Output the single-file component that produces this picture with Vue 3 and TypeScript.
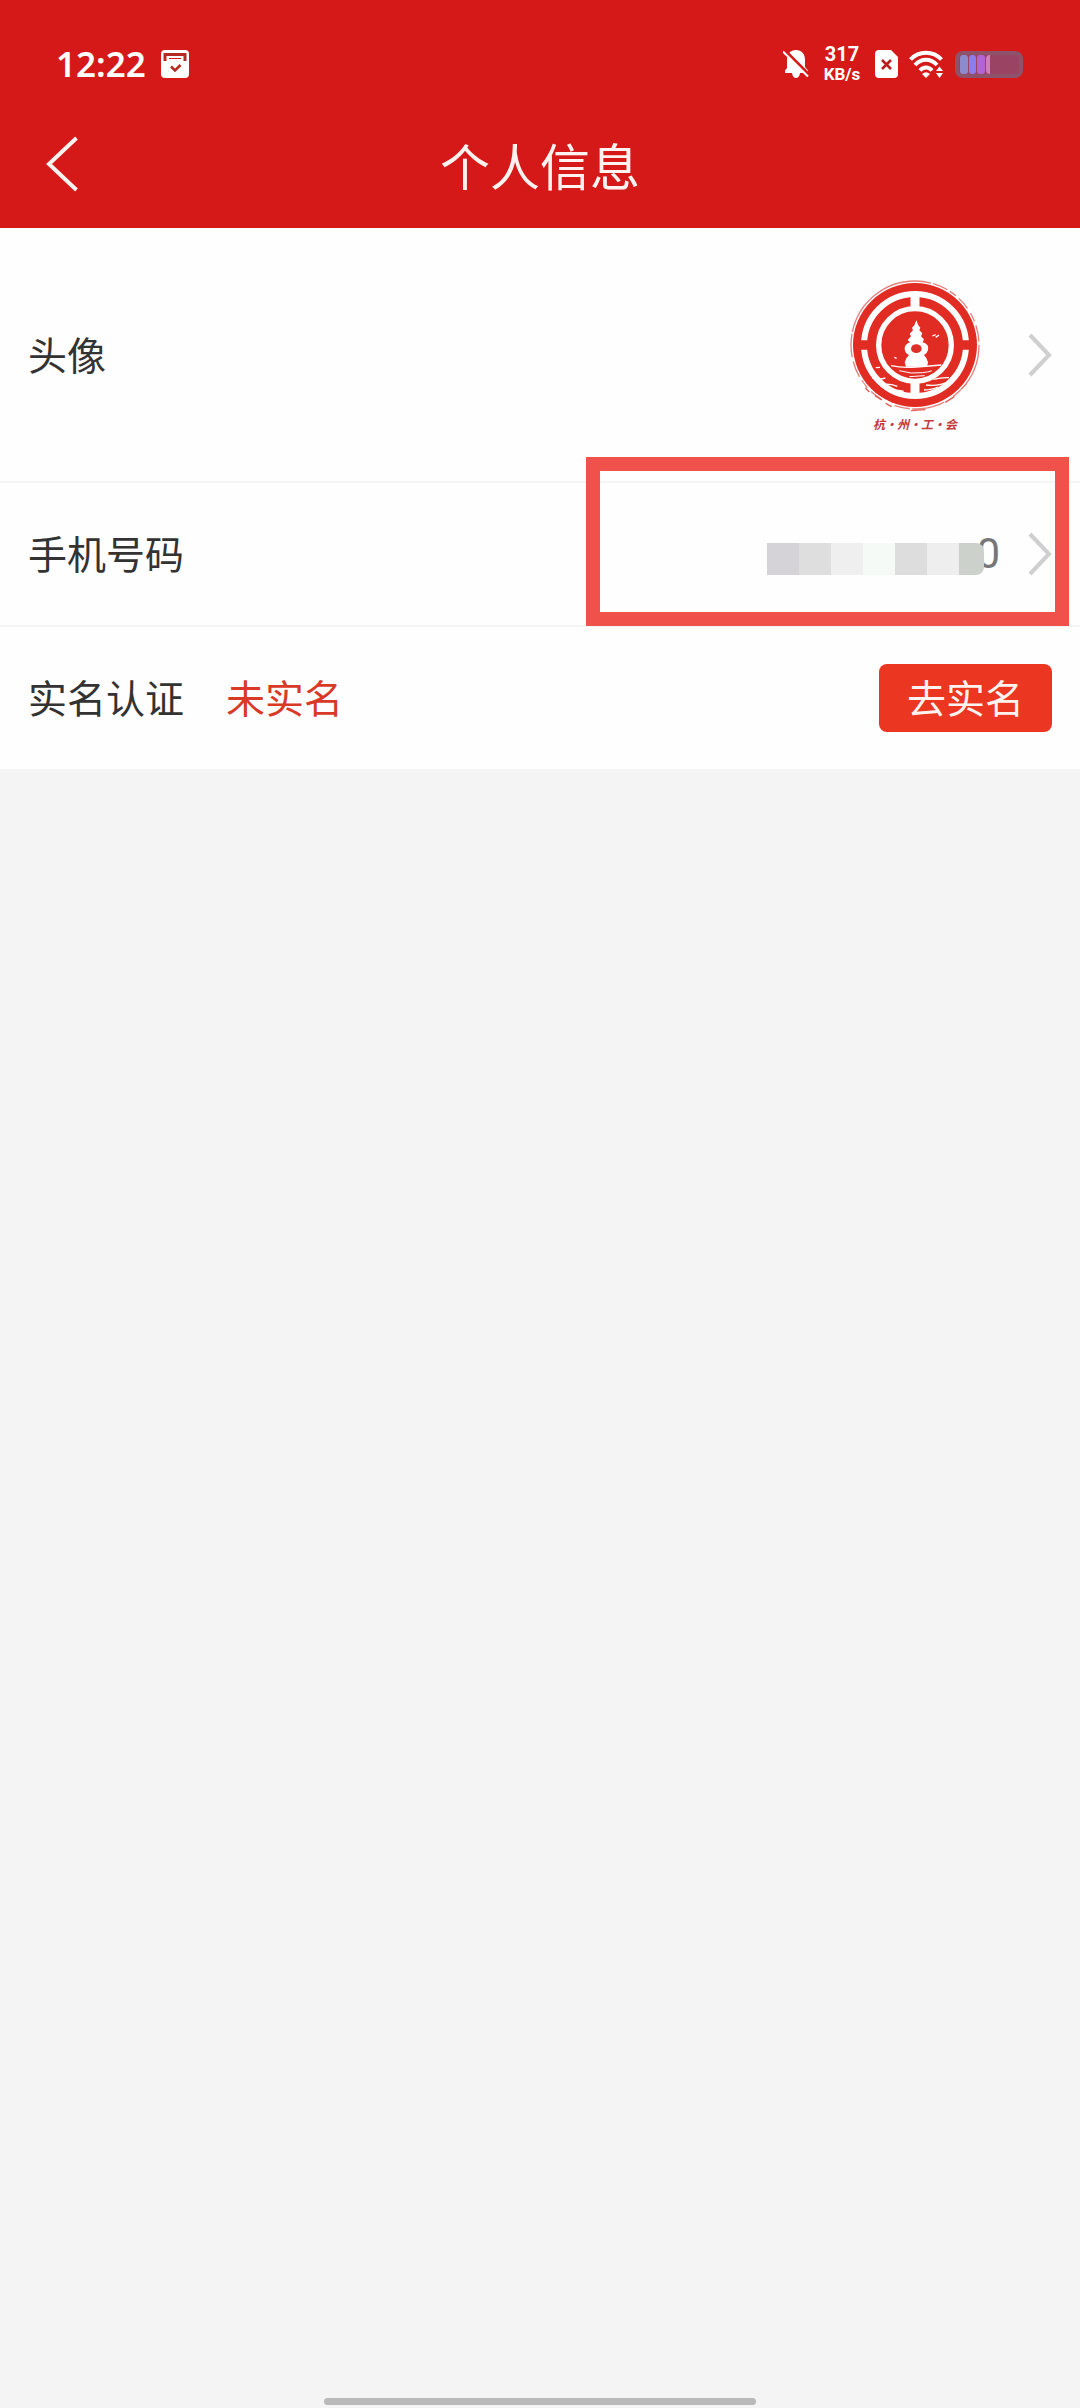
<script setup lang="ts">
interface ProfileRow {
  key: string
  label: string
}

const avatarRow: ProfileRow = { key: 'avatar', label: '头像' }
const phoneRow: ProfileRow = { key: 'phone', label: '手机号码' }
const realNameRow: ProfileRow = { key: 'real-name', label: '实名认证' }

const maskTones: string[] = ['#d5d3d7', '#dedede', '#efefef', '#f6faf7', '#dddddd', '#eeeeee', '#ccd1cb']
</script>

<template>
  <div class="page">
    <header class="top">
      <div class="status">
        <span class="time">12:22</span>
        <svg class="app-icon" width="28" height="28" viewBox="0 0 28 28" aria-hidden="true">
          <rect width="28" height="28" rx="4" fill="#fff" />
          <path d="M4 11V4.500H24V11" fill="none" stroke="#b52a22" stroke-width="3" />
          <path d="M8 8.500H20" stroke="#d51919" stroke-width="1" />
          <path d="M10 16.500L14 20.500L19.500 15" fill="none" stroke="#b52a22" stroke-width="2.600" />
        </svg>
        <div class="indicators">
          <svg width="26" height="28" viewBox="0 0 26 28" aria-hidden="true">
            <path d="M13 0C18.500 0 22 4 22 9.500V17L25 20.500V23H2V20.500L4 18V9.500C4 4 7.500 0 13 0Z" fill="#fff" />
            <path d="M9 23H17C16.500 26.500 15 28 13 28S9.500 26.500 9 23Z" fill="#fff" />
            <path d="M1.500 0L26 24.500" stroke="#d51919" stroke-width="3" />
            <path d="M0 1.500L25 26.500" stroke="#fff" stroke-width="2" />
          </svg>
          <span class="speed"><b>317</b><small>KB/s</small></span>
          <svg width="23" height="28" viewBox="0 0 23 28" aria-hidden="true">
            <path d="M4 0H16L23 7V24Q23 28 19 28H4Q0 28 0 24V4Q0 0 4 0Z" fill="#fff" />
            <path d="M7 10L16 19M16 10L7 19" stroke="#b91d1d" stroke-width="2.600" />
          </svg>
          <svg width="35" height="28" viewBox="0 0 35 28" aria-hidden="true">
            <g fill="none" stroke="#fff" stroke-width="4">
              <path d="M1.500 9.500C10 .5 24 .5 32.500 9.500" />
              <path d="M6 15C12.500 8 21.500 8 28 15" />
              <path d="M11 20.500C14.500 16.500 19.500 16.500 23 20.500" />
            </g>
            <path d="M13 24Q17 20.500 21 24L17 28Z" fill="#fff" />
            <path d="M27 21L30.500 16.500L34 21ZM27 23L30.500 28L34 23Z" fill="#fff" />
          </svg>
          <svg width="68" height="27" viewBox="0 0 68 27" aria-hidden="true">
            <rect width="68" height="27" rx="8" fill="#8c536b" />
            <rect x="4" y="4" width="60" height="19" rx="4" fill="#9b4362" />
            <rect x="5" y="4" width="8" height="19" rx="3" fill="#8c8bcd" />
            <rect x="14" y="4" width="7" height="19" rx="3" fill="#8d7ce9" />
            <rect x="22" y="4" width="8" height="19" rx="3" fill="#b065d2" />
            <path d="M35 4Q31 4 31 8V19Q31 23 35 23Z" fill="#cf7fbd" />
          </svg>
        </div>
      </div>
      <nav class="nav">
        <button class="back" type="button" aria-label="返回">
          <svg width="32" height="56" viewBox="0 0 32 56" aria-hidden="true">
            <path d="M30.500 2L3 28L30.500 54" fill="none" stroke="#fff2ef" stroke-width="4" />
          </svg>
        </button>
        <h1>个人信息</h1>
        <span></span>
      </nav>
    </header>

    <main class="list">
      <a class="row" href="#avatar">
        <span class="label">{{ avatarRow.label }}</span>
        <span class="avatar">
          <svg width="130" height="132" viewBox="0 0 390 396" aria-hidden="true">
            <circle cx="195" cy="195" r="186" fill="#e12c24" />
            <circle cx="195" cy="195" r="192" fill="none" stroke="#e5807b" stroke-width="4" stroke-dasharray="310 7 46 9 22 12 40 16 28 12 50 14 70 6" />
            <g fill="none" stroke="#fff">
              <circle cx="195" cy="195" r="153" stroke-width="18" />
              <circle cx="195" cy="195" r="109" stroke-width="16" />
              <path d="M195 40V90M195 300V350" stroke-width="27" />
            </g>
            <path d="M22 195H62M328 195H368" stroke="#e12c24" stroke-width="28" />
            <path
              d="M199 121L205 136L211 143L208 151L217 160L213 169L222 178L218 187Q239 193 234 210Q231 221 222 225Q232 235 234 247L231 260H168L164 247Q166 235 177 225Q165 220 164 207Q163 193 180 187L173 180L183 169L179 161L189 151L186 143L193 136Z"
              fill="#fff"
            />
            <ellipse cx="199" cy="206" rx="16" ry="13" fill="#dc3028" />
            <g fill="none" stroke="#fff">
              <path d="M123 257Q155 264 198 261T274 255" stroke-width="4" />
              <path d="M148 272Q184 283 218 278T242 272M178 290L224 287" stroke-width="3" />
              <path d="M247 168L257 164M257 172L267 165M133 232L140 235M77 263L90 262M66 293Q85 300 106 294M88 314Q118 309 142 319M250 298Q275 292 297 293M228 315Q264 320 299 304M222 330Q247 329 264 321M120 334Q145 329 161 334" stroke-width="4" />
              <path d="M48 334L71 351M106 362L126 377M281 365L311 351M331 328L349 311M30 304L42 319" stroke-width="8" />
            </g>
            <path d="M75 347L95 360M107 370L125 380M183 392L226 389M286 367L313 350M333 328L350 310M46 324L58 336" fill="none" stroke="#e55a52" stroke-width="4" />
          </svg>
          <span class="caption">杭·州·工·会</span>
        </span>
        <svg class="chevron" width="24" height="44" viewBox="0 0 24 44" aria-hidden="true">
          <path d="M2 2L21 22L2 42" fill="none" stroke="#cfcfcf" stroke-width="4" />
        </svg>
      </a>

      <a class="row" href="#phone">
        <span class="label">{{ phoneRow.label }}</span>
        <span class="phone">
          <span class="mask">
            <i v-for="(tone, index) in maskTones" :key="index" :style="{ background: tone }"></i>
          </span>
          <span class="digit">0</span>
        </span>
        <svg class="chevron" width="24" height="44" viewBox="0 0 24 44" aria-hidden="true">
          <path d="M2 2L21 22L2 42" fill="none" stroke="#cfcfcf" stroke-width="4" />
        </svg>
        <span class="highlight"></span>
      </a>

      <section class="row">
        <span class="label">{{ realNameRow.label }}</span>
        <span class="label state">未实名</span>
        <button class="verify" type="button">去实名</button>
      </section>
    </main>

    <div class="home-bar"></div>
  </div>
</template>

<style>
body {
  margin: 0;
  background: #f4f4f4;
}
</style>

<style scoped>
.page {
  display: flex;
  flex-direction: column;
  min-height: 100vh;
  box-sizing: border-box;
  background: #f4f4f4;
  color: #333;
  font-family: "Noto Sans CJK SC", sans-serif;
  font-size: 39px;
  line-height: 56px;
}

svg {
  display: block;
  flex: none;
}

.top {
  padding-top: 24px;
  background: #d51919;
  color: #fff;
}

.status {
  display: flex;
  align-items: center;
  height: 80px;
  padding: 0 57px 0 56px;
}

.time {
  font-family: "Noto Sans", "Noto Sans CJK SC", sans-serif;
  font-size: 35px;
  font-weight: 600;
}

.app-icon {
  margin-left: 15px;
}

.indicators {
  display: flex;
  align-items: center;
  gap: 11px;
  margin-left: auto;
}

.speed {
  display: flex;
  flex-direction: column;
  align-items: center;
  width: 44px;
  font-family: Roboto, "Noto Sans CJK SC", sans-serif;
  line-height: 20px;
}

.speed b {
  font-size: 20px;
  font-weight: 700;
}

.speed small {
  font-size: 17px;
  font-weight: 700;
}

.nav {
  display: grid;
  grid-template-columns: 1fr auto 1fr;
  align-items: center;
  height: 120px;
  padding: 0 46px 4px;
}

.back {
  justify-self: start;
  padding: 0;
  border: 0;
  background: none;
}

h1 {
  margin: 0;
  color: #fff2ef;
  font-size: 50px;
  font-weight: 400;
  line-height: 72px;
}

.row {
  position: relative;
  display: flex;
  align-items: center;
  min-height: 142px;
  padding: 0 28px;
  border-bottom: 2px solid #f5f5f5;
  background: #fefefe;
  color: #333;
  text-decoration: none;
}

.row:last-child {
  border-bottom: 0;
}

.label {
  padding-bottom: 4px;
}

.avatar {
  display: flex;
  flex-direction: column;
  align-items: center;
  gap: 3px;
  margin: 52px 0 49px auto;
}

.caption {
  color: #c43a3a;
  font-size: 12px;
  font-style: italic;
  font-weight: 700;
  line-height: 17px;
}

.chevron {
  margin-left: 48px;
}

.phone {
  display: flex;
  align-items: center;
  margin-left: auto;
}

.phone + .chevron {
  margin-left: 28px;
}

.mask {
  z-index: 1;
  display: flex;
  width: 217px;
  height: 32px;
  margin-top: 10px;
  margin-right: -8px;
  overflow: hidden;
  border-radius: 0 8px 8px 0;
}

.mask i {
  flex: none;
  width: 32px;
}

.digit {
  color: #777;
  font-family: Roboto, "Noto Sans CJK SC", sans-serif;
  font-size: 42px;
}

.highlight {
  position: absolute;
  top: -26px;
  right: 11px;
  bottom: -1px;
  z-index: 2;
  width: 483px;
  box-sizing: border-box;
  border: 14px solid #f0524b;
  pointer-events: none;
}

.state {
  margin-left: 42px;
  color: #d93a27;
}

.verify {
  height: 68px;
  margin-left: auto;
  padding: 0 28px 4px;
  border: 0;
  border-radius: 8px;
  background: #eb3622;
  color: #fff2ef;
  font: inherit;
}

.home-bar {
  width: 40%;
  height: 7px;
  margin: auto auto 3px;
  border-radius: 4px;
  background: #b9b9b9;
}
</style>
